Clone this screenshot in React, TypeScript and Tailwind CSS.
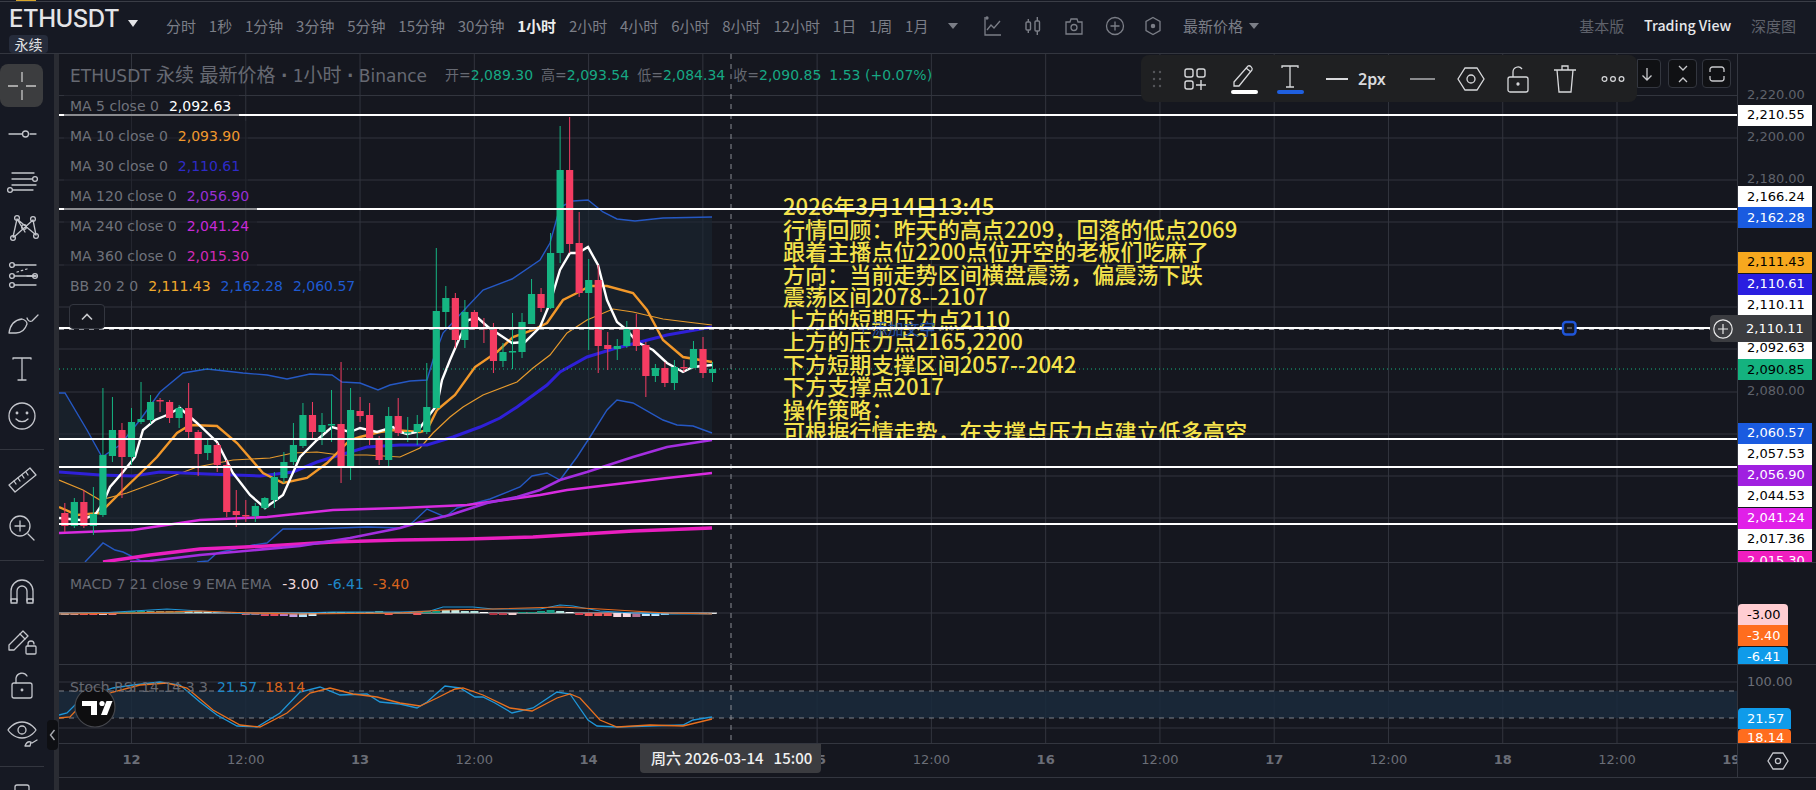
import React from "react";

const GREEN = "#15b582";
const RED = "#f43c62";

const periods = ["分时", "1秒", "1分钟", "3分钟", "5分钟", "15分钟", "30分钟", "1小时", "2小时", "4小时", "6小时", "8小时", "12小时", "1日", "1周", "1月"];

// k, bodyTop, bodyBottom, wickTop, wickBottom, isGreen
const candles: [number, number, number, number, number, number][] = [
  [-7, 513, 526, 503, 532, 0], [-6, 502, 526, 498, 528, 1], [-5, 502, 526, 490, 528, 0], [-4, 514, 526, 487, 535, 1],
  [-3, 455, 515, 388, 517, 1], [-2, 430, 456, 397, 462, 1], [-1, 430, 457, 423, 498, 0], [0, 422, 457, 408, 465, 1],
  [1, 419, 422, 382, 424, 1], [2, 402, 420, 395, 424, 1], [3, 400, 401, 398, 412, 0], [4, 402, 418, 400, 423, 0],
  [5, 408, 418, 405, 428, 1], [6, 408, 432, 383, 438, 0], [7, 432, 454, 430, 476, 0], [8, 445, 453, 438, 460, 1],
  [9, 445, 465, 443, 472, 0], [10, 465, 512, 460, 517, 0], [11, 511, 515, 490, 527, 0], [12, 515, 516, 500, 522, 0],
  [13, 506, 516, 503, 522, 1], [14, 498, 508, 497, 510, 1], [15, 477, 500, 472, 508, 1], [16, 462, 478, 452, 483, 1],
  [17, 445, 462, 423, 465, 1], [18, 415, 446, 403, 448, 1], [19, 415, 432, 402, 440, 0], [20, 425, 432, 413, 445, 1],
  [21, 424, 425, 390, 442, 1], [22, 424, 467, 362, 483, 0], [23, 410, 467, 388, 480, 1], [24, 411, 416, 397, 422, 0],
  [25, 415, 440, 403, 445, 0], [26, 440, 460, 436, 465, 0], [27, 416, 460, 407, 468, 1], [28, 416, 433, 398, 436, 0],
  [29, 432, 433, 417, 442, 1], [30, 424, 432, 415, 445, 1], [31, 407, 432, 363, 434, 1], [32, 311, 408, 248, 410, 1],
  [33, 298, 312, 286, 327, 1], [34, 298, 340, 293, 348, 0], [35, 312, 340, 300, 348, 1], [36, 312, 327, 310, 330, 0],
  [37, 328, 329, 318, 343, 0], [38, 329, 361, 323, 373, 0], [39, 352, 361, 343, 367, 1], [40, 351, 352, 313, 369, 1],
  [41, 322, 352, 313, 358, 1], [42, 294, 324, 279, 324, 1], [43, 294, 308, 288, 312, 0], [44, 253, 308, 233, 309, 1],
  [45, 170, 253, 126, 263, 1], [46, 170, 244, 117, 253, 0], [47, 243, 293, 212, 297, 0], [48, 280, 293, 259, 350, 1],
  [49, 280, 346, 265, 373, 0], [50, 345, 349, 332, 370, 0], [51, 346, 349, 339, 360, 1], [52, 328, 346, 321, 348, 1],
  [53, 328, 346, 314, 351, 0], [54, 345, 376, 342, 397, 0], [55, 368, 376, 364, 382, 1], [56, 368, 383, 362, 387, 0],
  [57, 367, 383, 360, 390, 1], [58, 367, 368, 360, 372, 0], [59, 349, 368, 341, 368, 1], [60, 349, 373, 337, 378, 0],
  [61, 369, 373, 362, 382, 1],
];

const ma5 = "59,518 80,520 95,515 103,503 110,487 123,472 135,457 143,430 155,420 167,415 180,408 197,423 217,442 233,473 250,495 265,508 283,495 300,457 307,450 317,440 332,427 350,432 360,428 377,432 393,427 400,432 407,434 417,432 427,418 437,405 442,380 450,360 460,337 468,320 478,318 488,327 500,335 512,343 525,342 540,327 550,303 560,270 570,253 578,253 588,247 598,265 607,300 617,322 627,330 637,342 653,350 667,363 683,372 693,367 712,365";
const ma10 = "59,507 77,515 100,513 123,490 147,467 157,457 177,433 190,425 217,426 237,443 263,473 283,483 307,478 327,463 350,440 360,437 380,432 393,430 420,432 427,430 437,410 455,395 475,367 497,352 513,337 533,330 547,323 563,300 577,293 590,286 607,286 633,293 647,310 663,340 683,357 712,362";
const ma20 = "59,480 83,490 100,500 127,493 157,482 197,467 233,460 270,458 293,453 317,452 340,455 367,455 400,457 420,448 433,433 450,417 463,407 483,395 517,382 533,368 550,355 567,333 587,320 613,309 633,312 663,319 687,322 712,325";
const ma30 = "59,472 100,475 133,476 160,472 207,474 260,476 293,472 317,462 340,455 367,447 400,445 427,445 453,437 480,427 500,418 517,407 547,385 560,372 587,357 613,349 640,342 667,335 712,327";
const ma120 = "130,562 150,561 200,555 300,546 350,538 400,528 417,523 450,515 487,503 517,497 540,490 560,480 587,472 633,457 667,447 712,440";
const ma240 = "59,533 133,530 200,520 267,517 333,510 400,508 467,505 540,495 567,490 617,484 667,478 712,473";
const ma360 = "103,562 150,555 200,549 267,546 333,542 400,540 467,539 533,537 583,534 633,531 712,528";
const bbUp = "59,393 65,393 87,430 102,457 120,445 140,420 160,392 183,373 207,369 243,373 267,375 287,379 310,374 332,375 342,382 360,383 378,390 390,385 410,381 427,380 433,360 443,333 467,307 483,290 512,279 540,260 550,243 560,207 573,201 588,200 603,212 617,219 635,221 663,218 712,217";
const bbLow1 = "85,562 103,543 115,550 123,552 143,562";
const bbLow2 = "197,562 208,561 217,553 253,545 267,543 283,529 310,529 367,527 400,528 412,523 427,509 445,517 457,508 490,499 520,487 532,476 547,473 560,480 577,457 590,437 607,410 617,400 633,403 663,420 677,425 693,426 712,433";
const bandFill = `${bbUp} 712,433 693,426 677,425 663,420 633,403 617,400 607,410 590,437 577,457 560,480 547,473 532,476 520,487 490,499 457,508 445,517 427,509 412,523 400,528 367,527 310,529 283,529 267,543 253,545 217,553 208,561 197,562 59,562`;

const stBlue = "59,715 67,713 77,703 93,695 113,688 133,685 160,682 180,685 200,702 217,715 237,726 257,727 280,713 300,692 320,687 340,695 367,694 380,702 400,704 417,708 427,702 445,686 460,688 475,697 483,697 495,703 512,713 533,708 557,692 570,694 588,720 597,726 617,727 650,726 683,725 693,720 712,717";
const stOrange = "59,718 70,717 83,703 113,692 140,685 167,683 187,688 213,710 240,725 260,727 287,713 310,693 330,688 353,694 377,697 400,703 420,706 437,698 455,689 463,688 483,695 510,708 532,711 557,698 570,694 580,698 600,720 617,727 650,725 683,726 712,719";
const mdBlue = "59,614 100,613 133,611 167,609 200,611 250,614 300,613 333,612 400,612 430,611 443,607 473,607 493,609 540,609 560,605 573,606 600,611 633,613 667,614 712,614";
const mdOrange = "59,614 133,613 200,611 250,613 300,614 400,613 443,610 493,609 560,607 600,609 633,611 667,613 712,614";

const histogram: [string, number][] = [
  ["#f6d5d5", -2], ["#e8a3a3", -2], ["#ef5b5b", -2], ["#ef5b5b", -2], ["#f0c0c0", -2], ["#e07a7a", -2], ["#15a085", 1], ["#159a80", 2],
  ["#1aa58c", 2], ["#6aa58c", 2], ["#8a9a6a", 2], ["#7a9a6a", 2], ["#6a9a7a", 2], ["#a8e0d8", 2], ["#b5e5de", 2], ["#c5ece6", 2],
  ["#c5ece6", 1], ["#ffffff", 1], ["#ffffff", 1], ["#ef5b5b", -2], ["#ef5b5b", -2], ["#e84a5f", -3], ["#e84a5f", -3], ["#b77ad0", -3],
  ["#c0a0e0", -4], ["#b8e0f8", -4], ["#ccefff", -3], ["#ffffff", 1], ["#a0d0b0", 1], ["#a0d0b0", 1], ["#8ab090", 1], ["#8ab090", 1],
  ["#d0d0a0", 1], ["#70b090", 2], ["#ef5b5b", -2], ["#a0b0a0", 1], ["#a0b0a0", 1], ["#ef5b5b", -2], ["#159a80", 2], ["#159a80", 2],
  ["#b5e5de", 3], ["#c5ece6", 3], ["#b5e5de", 2], ["#b5e5de", 2], ["#ffffff", 1], ["#b03040", -2], ["#c04050", -2], ["#f0d0d0", -2],
  ["#149a80", 1], ["#149a80", 1], ["#18a088", 2], ["#18a088", 3], ["#b5e5de", 2], ["#ffffff", 1], ["#d84050", -2], ["#ef5b5b", -3],
  ["#ef5b5b", -3], ["#ef5b5b", -3], ["#f8d8e0", -4], ["#f8d8e0", -4], ["#b07090", -4], ["#c8e8ff", -3], ["#c8e8ff", -3], ["#c8e8ff", -2],
  ["#9098a8", -1], ["#9098a8", -1], ["#909090", -1], ["#c8c8c8", -1], ["#e0e0e0", -1],
];

const gridX = Array.from({ length: 14 }, (_, i) => 131.5 + 114.27 * i);
const gridY = [95.5, 138, 180, 222, 265, 307, 349, 392, 434, 476, 518];

const timeLabels = ["12", "12:00", "13", "12:00", "14", "12:00", "15", "12:00", "16", "12:00", "17", "12:00", "18", "12:00", "19"];

const priceTags: { y: number; t: string; bg?: string; fg?: string }[] = [
  { y: 95, t: "2,220.00" },
  { y: 137, t: "2,200.00" },
  { y: 179, t: "2,180.00" },
  { y: 391, t: "2,080.00" },
  { y: 115, t: "2,210.55", bg: "bg-white", fg: "text-black" },
  { y: 196.5, t: "2,166.24", bg: "bg-white", fg: "text-black" },
  { y: 217.5, t: "2,162.28", bg: "bg-[#1a5be0]", fg: "text-white" },
  { y: 262, t: "2,111.43", bg: "bg-[#f7a81e]", fg: "text-black" },
  { y: 284, t: "2,110.61", bg: "bg-[#2a1ee0]", fg: "text-white" },
  { y: 305, t: "2,110.11", bg: "bg-white", fg: "text-black" },
  { y: 348, t: "2,092.63", bg: "bg-white", fg: "text-black" },
  { y: 369.5, t: "2,090.85", bg: "bg-[#14b27f]", fg: "text-black" },
  { y: 433, t: "2,060.57", bg: "bg-[#1a5be0]", fg: "text-white" },
  { y: 454, t: "2,057.53", bg: "bg-white", fg: "text-black" },
  { y: 475, t: "2,056.90", bg: "bg-[#a020e0]", fg: "text-white" },
  { y: 496, t: "2,044.53", bg: "bg-white", fg: "text-black" },
  { y: 518, t: "2,041.24", bg: "bg-[#e020e8]", fg: "text-white" },
  { y: 539, t: "2,017.36", bg: "bg-white", fg: "text-black" },
  { y: 561, t: "2,015.30", bg: "bg-[#f01ec0]", fg: "text-white" },
];

const noteLines = [
  "2026年3月14日13:45",
  "行情回顾：昨天的高点2209，回落的低点2069",
  "跟着主播点位2200点位开空的老板们吃麻了",
  "方向：当前走势区间横盘震荡，偏震荡下跌",
  "震荡区间2078--2107",
  "上方的短期压力点2110",
  "上方的压力点2165,2200",
  "下方短期支撑区间2057--2042",
  "下方支撑点2017",
  "操作策略：",
  "可根据行情走势，在支撑点压力点建立低多高空",
];

const Ico = ({ children, w = 34, h = 34 }: { children: React.ReactNode; w?: number; h?: number }) => (
  <svg width={w} height={h} viewBox="0 0 34 34" fill="none" stroke="#c4c6cc" strokeWidth="1.3" strokeLinecap="round" strokeLinejoin="round">
    {children}
  </svg>
);

const side: React.ReactNode[] = [
  <Ico key="a"><path d="M4 17h13M25 17h6M8 17" /><circle cx="20.5" cy="17" r="3" /></Ico>,
  <Ico key="b"><path d="M7 9h22M7 15h20M7 21h24M8 26h20" /><circle cx="30" cy="15" r="2.4" /><circle cx="5" cy="26" r="2.4" /></Ico>,
  <Ico key="c"><path d="M12 8 8 26M12 8l8 13M28 9 31 24M28 9 9 26M12 8l19 16" /><circle cx="12" cy="7" r="2.4" /><circle cx="28" cy="8" r="2.4" /><circle cx="8" cy="27" r="2.4" /><circle cx="31" cy="25" r="2.4" /><circle cx="19" cy="16" r="2.4" /></Ico>,
  <Ico key="d"><path d="M9 7h22M9 18h22M9 27h22" /><path d="M12 14l10-3" strokeDasharray="1.5 3" /><path d="M22 18h9" /><circle cx="7" cy="7" r="2.4" /><circle cx="7" cy="18" r="2.4" /><circle cx="7" cy="27" r="2.4" /><circle cx="30" cy="18" r="2.4" /></Ico>,
  <Ico key="e"><path d="M4 28c1-7 5-13 13-14 3 1 5 3 5 5-2 6-6 9-11 9H4Z" /><path d="M22 13c1 3 3 4 5 3l6-6" /></Ico>,
  <Ico key="f"><path d="M8 7v-1h18v1M17 6v22M13 28h8" /></Ico>,
  <Ico key="g"><circle cx="17" cy="17" r="13" /><circle cx="12" cy="14" r="0.8" /><circle cx="22" cy="14" r="0.8" /><path d="M11 20c3 3.5 9 3.5 12 0" /></Ico>,
];
const side2: React.ReactNode[] = [
  <Ico key="h"><path d="M4 21 25 4l6 7-21 17Z" /><path d="M9 17l2 3M13 14l2 3M17 11l2 3M21 8l2 3" /></Ico>,
  <Ico key="i"><circle cx="15" cy="15" r="10" /><path d="M15 10v10M10 15h10M23 23l6 6" /></Ico>,
];
const side3: React.ReactNode[] = [
  <Ico key="j"><path d="M6 26V16a11 11 0 0 1 22 0v10" /><path d="M12 26V16a5 5 0 0 1 10 0v10" /><path d="M6 24h6v4H6zM22 24h6v4h-6z" /></Ico>,
  <Ico key="k"><path d="M4 23 18 9l5 5-14 14H4Z" /><path d="M15 12l5 5" /><rect x="21" y="24" width="10" height="8" rx="1" /><path d="M23 24v-2a3 3 0 0 1 6 0" /></Ico>,
  <Ico key="l"><rect x="7" y="14" width="20" height="15" rx="2" /><path d="M11 14V9a6 6 0 0 1 11-2" /><circle cx="17" cy="21" r="0.8" /></Ico>,
  <Ico key="m"><path d="M3 14s5-8 14-8 14 8 14 8-5 8-14 8S3 14 3 14Z" /><circle cx="17" cy="14" r="4" /><path d="M20 30c1-3 3-5 6-4l-1 4ZM27 27l5-3" /></Ico>,
];

const pane = (y: number, h: number, children: React.ReactNode, withGridH: number[]) => (
  <svg className="absolute inset-0" width="1678" height={h} viewBox={`59 ${y} 1678 ${h}`}>
    {gridX.map((x) => (
      <line key={x} x1={x} x2={x} y1={y} y2={y + h} stroke="#32353e" />
    ))}
    {withGridH.map((g) => (
      <line key={g} x1="59" x2="1737" y1={g} y2={g} stroke="#32353e" />
    ))}
    {children}
  </svg>
);

const Legend = ({ label, vals }: { label: string; vals: [string, string][] }) => (
  <div className="flex h-[30px] items-center gap-[10px] bg-[#161820]/50 pl-[6px] pr-[8px] text-[14px] text-[#6f727b]">
    <span>{label}</span>
    {vals.map(([v, c]) => (
      <span key={v} className={c}>{v}</span>
    ))}
  </div>
);

export default function App() {
  return (
    <div className="relative flex h-[790px] w-[1816px] flex-col overflow-hidden bg-[#161923] font-['DejaVu_Sans','Noto_Sans_CJK_SC',sans-serif] text-[#787b86]">
      {/* top sliver */}
      <div className="absolute left-[16px] top-0 h-px w-[20px] bg-[#d9a72b]" />
      <div className="absolute left-0 right-0 top-[1px] h-px bg-[#3a3d46]" />

      {/* header */}
      <header className="flex h-[54px] shrink-0 items-start border-b border-[#33363f] font-['Noto_Sans_CJK_SC',sans-serif]">
        <div className="relative ml-[9px] w-[157px] shrink-0 pt-[4px]">
          <div className="flex items-center">
            <span className="font-['Inter',sans-serif] text-[24px] font-medium leading-[30px] tracking-[-0.5px] text-[#e4e5e8]">ETHUSDT</span>
            <span className="ml-[9px] mt-[9px] h-0 w-0 border-x-[5px] border-t-[7px] border-x-transparent border-t-[#e4e5e8]" />
          </div>
          <span className="absolute left-0 top-[35px] flex h-[18px] w-[39px] items-center justify-center rounded-sm bg-[#262c3b] text-[14px] text-[#e0e1e4]">永续</span>
        </div>
        <nav className="flex h-[53px] flex-1 items-center gap-[12.8px] pb-[1px] text-[15px] text-[#7b7e87]">
          {periods.map((p) => (
            <span key={p} className={p === "1小时" ? "font-bold text-[#eceded]" : ""}>{p}</span>
          ))}
          <span className="ml-[7px] h-0 w-0 border-x-[5px] border-t-[6px] border-x-transparent border-t-[#7b7e87]" />
          <svg className="ml-[12px]" width="18" height="22" viewBox="0 0 18 22" fill="none" stroke="#7b7e87" strokeWidth="1.3">
            <path d="M2 2v18h16M4 15l4-5 3 3 6-7" />
            <circle cx="4" cy="3" r="1" fill="#7b7e87" />
          </svg>
          <svg className="ml-[11px]" width="16" height="20" viewBox="0 0 16 20" fill="none" stroke="#7b7e87" strokeWidth="1.4">
            <rect x="1" y="6" width="4.5" height="8" rx="1" />
            <rect x="10" y="5" width="4.5" height="10" rx="1" />
            <path d="M3.3 3v3M3.3 14v3M12.3 1v4M12.3 15v4" />
          </svg>
          <svg className="ml-[11px]" width="18" height="18" viewBox="0 0 18 18" fill="none" stroke="#7b7e87" strokeWidth="1.3">
            <path d="M1 5h4l1-3h6l1 3h4v12H1Z" />
            <circle cx="9" cy="10.5" r="3" />
          </svg>
          <svg className="ml-[10px]" width="20" height="20" viewBox="0 0 20 20" fill="none" stroke="#7b7e87" strokeWidth="1.3">
            <circle cx="10" cy="10" r="8.5" />
            <path d="M10 5.5v9M5.5 10h9" />
          </svg>
          <svg className="ml-[6px]" width="18" height="20" viewBox="0 0 18 20" fill="none" stroke="#7b7e87" strokeWidth="1.3">
            <path d="M9 1.5 16 5.5v9L9 18.5l-7-4v-9Z" />
            <circle cx="9" cy="10" r="1.6" fill="#7b7e87" />
          </svg>
          <span className="ml-[8px]">最新价格</span>
          <span className="-ml-[7px] h-0 w-0 border-x-[5px] border-t-[6px] border-x-transparent border-t-[#7b7e87]" />
          <span className="ml-auto text-[#5f626b]">基本版</span>
          <span className="ml-[7px] text-[14.2px] font-medium text-[#e6e7ea]">Trading View</span>
          <span className="ml-[7px] mr-[20px] text-[#5f626b]">深度图</span>
        </nav>
      </header>

      <div className="flex min-h-0 flex-1">
        {/* left toolbar */}
        <aside className="relative flex w-[59px] shrink-0 overflow-hidden">
          <div className="flex w-[44px] shrink-0 flex-col pt-[10px]">
            <div className="flex h-[43px] w-[43px] shrink-0 items-center justify-center rounded-lg bg-[#3c3d3f]">
              <svg width="30" height="30" viewBox="0 0 30 30" stroke="#c8c8c8" strokeWidth="1.3">
                <path d="M1 15h10M19 15h10M15 1v10M15 19v10" />
              </svg>
            </div>
            <div className="mt-[3px] flex flex-col">
              {side.map((n, i) => (
                <div key={i} className="flex h-[47px] items-center justify-center">{n}</div>
              ))}
            </div>
            <div className="mt-[10px] h-px shrink-0 bg-[#33363f]" />
            <div className="mt-[7px] flex flex-col">
              {side2.map((n, i) => (
                <div key={i} className="flex h-[47px] items-center justify-center">{n}</div>
              ))}
            </div>
            <div className="mt-[9px] h-px shrink-0 bg-[#33363f]" />
            <div className="mt-[7px] flex flex-col">
              {side3.map((n, i) => (
                <div key={i} className="flex h-[47px] items-center justify-center">{n}</div>
              ))}
            </div>
            <div className="mt-[10px] h-px shrink-0 bg-[#33363f]" />
            <div className="mt-[12px] flex shrink-0 justify-center">
              <Ico><rect x="10" y="6" width="14" height="24" rx="2" /></Ico>
            </div>
          </div>
          <div className="ml-auto w-[5px] bg-[#2a2c33]" />
          <div className="absolute left-[47px] top-[666px] flex h-[30px] w-[11px] items-center justify-center rounded bg-[#0e0f13] text-[#a8aab0]">
            <svg width="7" height="12" viewBox="0 0 7 12" fill="none" stroke="currentColor" strokeWidth="1.4"><path d="M5.5 1 1.5 6l4 5" /></svg>
          </div>
        </aside>

        {/* chart panes */}
        <main className="flex min-w-0 flex-1 flex-col bg-[#15171f]">
          {/* price pane */}
          <section className="relative flex h-[509px] shrink-0 border-b border-[#33363f]">
            <div className="relative w-[1678px] shrink-0 overflow-hidden">
              {pane(
                54,
                508,
                <>
                  <polygon points={bandFill} fill="#1b2632" opacity="0.6" />
                  <polyline points={bbUp} fill="none" stroke="#2558c4" strokeWidth="1.4" />
                  <polyline points={bbLow1} fill="none" stroke="#2558c4" strokeWidth="1.4" />
                  <polyline points={bbLow2} fill="none" stroke="#2558c4" strokeWidth="1.4" />
                  <polyline points={ma20} fill="none" stroke="#e79a2c" strokeWidth="1.2" />
                  <polyline points={ma360} fill="none" stroke="#ea1fc0" strokeWidth="3.4" />
                  <polyline points={ma240} fill="none" stroke="#d92be0" strokeWidth="2.6" />
                  <polyline points={ma120} fill="none" stroke="#a42ee0" strokeWidth="2.6" />
                  <polyline points={ma30} fill="none" stroke="#2f20d8" strokeWidth="3" />
                  <polyline points={ma10} fill="none" stroke="#f2982a" strokeWidth="2.4" />
                  <polyline points={ma5} fill="none" stroke="#ffffff" strokeWidth="2.4" />
                  <line x1="59" x2="1737" y1="369" y2="369" stroke="#15b582" strokeDasharray="1 3" />
                  {candles.map(([k, a, b, t, l, g]) => {
                    const x = 131.5 + 9.525 * k;
                    const c = g ? GREEN : RED;
                    return (
                      <g key={k}>
                        <line x1={x} x2={x} y1={t} y2={l} stroke={c} strokeWidth="1" />
                        <rect x={x - 3.6} y={a} width="7.2" height={Math.max(b - a, 1.5)} fill={c} />
                      </g>
                    );
                  })}
                  <line x1="731" x2="731" y1="54" y2="562" stroke="#8a8d94" strokeDasharray="5 5" />
                </>,
                gridY,
              )}

              {/* drawn note */}
              <div className="absolute left-[724px] top-[140px] h-[245px] w-[520px] overflow-hidden font-['Noto_Sans_CJK_SC',sans-serif] text-[22.1px] font-medium leading-[22.5px] text-[#f4e24c]">
                {noteLines.map((l) => (
                  <div key={l} className="whitespace-nowrap">{l}</div>
                ))}
              </div>
              <div className="absolute left-[800px] top-[263px] font-['Noto_Sans_CJK_SC',sans-serif] text-[16px] leading-[22px] text-[#25509f]">+ 添加文字</div>

              {/* horizontal drawings */}
              <svg className="absolute inset-0" width="1678" height="508" viewBox="59 54 1678 508">
                <line x1="59" x2="1710" y1="329.5" y2="329.5" stroke="#8a8d94" strokeDasharray="5 5" />
                {[115, 209, 439, 467, 524].map((y) => (
                  <line key={y} x1="59" x2="1737" y1={y} y2={y} stroke="#ffffff" strokeWidth="2" />
                ))}
                <line x1="59" x2="1710" y1="328" y2="328" stroke="#ffffff" strokeWidth="2" />
                <rect x="1563" y="322" width="12.5" height="12.5" rx="3" fill="#15171f" stroke="#1f55d8" strokeWidth="2.4" />
                <line x1="1567" x2="1572" y1="328" y2="328" stroke="#8a8d94" />
              </svg>

              {/* legend */}
              <div className="absolute left-[5px] top-0 flex flex-col items-start">
                <div className="flex h-[37px] items-center whitespace-nowrap pl-[6px] pt-[5px] text-[#666972]">
                  <span className="text-[17px]">
                    ETHUSDT <span className="text-[19px]">永续</span> <span className="text-[19px]">最新价格</span> <b>·</b> 1<span className="text-[19px]">小时</span> <b>·</b> Binance
                  </span>
                  <span className="ml-[18px] flex gap-[8px] text-[14px]">
                    <span>开=<span className="text-[#17a884]">2,089.30</span></span>
                    <span>高=<span className="text-[#17a884]">2,093.54</span></span>
                    <span>低=<span className="text-[#17a884]">2,084.34</span></span>
                    <span>收=<span className="text-[#17a884]">2,090.85</span></span>
                    <span className="text-[#17a884]">1.53 (+0.07%)</span>
                  </span>
                </div>
                <Legend label="MA 5 close 0" vals={[["2,092.63", "text-white"]]} />
                <Legend label="MA 10 close 0" vals={[["2,093.90", "text-[#f0982e]"]]} />
                <Legend label="MA 30 close 0" vals={[["2,110.61", "text-[#2e2bc8]"]]} />
                <Legend label="MA 120 close 0" vals={[["2,056.90", "text-[#9a2fd4]"]]} />
                <Legend label="MA 240 close 0" vals={[["2,041.24", "text-[#c82ad8]"]]} />
                <Legend label="MA 360 close 0" vals={[["2,015.30", "text-[#d02ab8]"]]} />
                <Legend label="BB 20 2 0" vals={[["2,111.43", "text-[#f0a92d]"], ["2,162.28", "text-[#1f5ad0]"], ["2,060.57", "text-[#1f5ad0]"]]} />
              </div>
              <div className="absolute left-[10px] top-[250px] flex h-[25px] w-[36px] items-center justify-center rounded border border-[#33363f] bg-[#15171f] text-[#c8c9cc]">
                <svg width="12" height="8" viewBox="0 0 12 8" fill="none" stroke="currentColor" strokeWidth="1.6"><path d="M1 6.5 6 1.5l5 5" /></svg>
              </div>

              {/* floating drawing toolbar */}
              <div className="absolute left-[1578px] top-[5px] flex h-[29px] w-[94px] items-center gap-[5px] text-[#c8c9cc]">
                <span className="mr-[2px] flex h-[29px] w-[24px] items-center justify-center rounded-r border border-[#33363f] bg-[#101114] pr-[4px]">
                  <svg width="12" height="14" viewBox="0 0 12 14" fill="none" stroke="currentColor" strokeWidth="1.3"><path d="M6 1v12M1.5 8.5 6 13l4.5-4.5" /></svg>
                </span>
                <span className="flex h-[29px] w-[29px] items-center justify-center rounded border border-[#33363f] bg-[#101114]">
                  <svg width="12" height="18" viewBox="0 0 12 18" fill="none" stroke="currentColor" strokeWidth="1.3"><path d="M2 1l4 4 4-4M2 17l4-4 4 4" /></svg>
                </span>
                <span className="flex h-[29px] w-[29px] items-center justify-center rounded border border-[#33363f] bg-[#101114]">
                  <svg width="16" height="16" viewBox="0 0 16 16" fill="none" stroke="currentColor" strokeWidth="1.3"><path d="M1 6V3.5A2.5 2.5 0 0 1 3.5 1h9A2.5 2.5 0 0 1 15 3.5V6M1 10v2.5A2.5 2.5 0 0 0 3.5 15h9a2.5 2.5 0 0 0 2.5-2.5V10" /></svg>
                </span>
              </div>
              <div className="absolute left-[1082px] top-[1px] flex h-[47px] w-[496px] items-center rounded-lg bg-[#1f2022] font-['Noto_Sans',sans-serif]">
                <svg className="ml-[11px]" width="10" height="20" viewBox="0 0 10 20" fill="#55575b">
                  <circle cx="2" cy="3" r="1.2" /><circle cx="8" cy="3" r="1.2" /><circle cx="2" cy="10" r="1.2" /><circle cx="8" cy="10" r="1.2" /><circle cx="2" cy="17" r="1.2" /><circle cx="8" cy="17" r="1.2" />
                </svg>
                <svg className="ml-[21px]" width="24" height="24" viewBox="0 0 24 24" fill="none" stroke="#d8d9dc" strokeWidth="1.4">
                  <rect x="2" y="2" width="8" height="8" rx="2" /><rect x="14" y="2" width="8" height="8" rx="2" /><rect x="2" y="14" width="8" height="8" rx="2" /><path d="M18 13v10M13 18h10" />
                </svg>
                <div className="ml-[23px] flex w-[28px] flex-col items-center">
                  <svg width="24" height="26" viewBox="0 0 24 26" fill="none" stroke="#d8d9dc" strokeWidth="1.3"><path d="M2 19 16 3c2-1 5 2 4 4L7 23H2Z" /><path d="M14 5l5 4" /></svg>
                  <span className="mt-[1px] h-[4px] w-[27px] rounded-full bg-white" />
                </div>
                <div className="ml-[18px] flex w-[28px] flex-col items-center">
                  <svg width="22" height="26" viewBox="0 0 22 26" fill="none" stroke="#d8d9dc" strokeWidth="1.3"><path d="M3 5V3h16v2M11 3v21M7 24h8" /></svg>
                  <span className="mt-[1px] h-[4px] w-[27px] rounded-full bg-[#1f5fe0]" />
                </div>
                <span className="ml-[22px] h-[2px] w-[22px] bg-[#d8d9dc]" />
                <span className="ml-[10px] text-[16px] font-semibold text-[#d8d9dc]">2px</span>
                <span className="ml-[24px] h-[2px] w-[25px] bg-[#8a8b8e]" />
                <svg className="ml-[22px]" width="28" height="26" viewBox="0 0 28 26" fill="none" stroke="#d8d9dc" strokeWidth="1.3"><path d="M8 2h12l7 11-7 11H8L1 13Z" /><circle cx="14" cy="13" r="4" /></svg>
                <svg className="ml-[22px]" width="22" height="28" viewBox="0 0 22 28" fill="none" stroke="#d8d9dc" strokeWidth="1.3"><rect x="1" y="12" width="20" height="15" rx="2" /><path d="M6 12V7a5 5 0 0 1 9-3" /><circle cx="11" cy="19" r="1" fill="#d8d9dc" /></svg>
                <svg className="ml-[24px]" width="24" height="30" viewBox="0 0 24 30" fill="none" stroke="#d8d9dc" strokeWidth="1.3"><path d="M1 6h22M9 6V2h6v4M4 6l2 22h12l2-22" /></svg>
                <svg className="ml-[24px]" width="24" height="8" viewBox="0 0 24 8" fill="none" stroke="#d8d9dc" strokeWidth="1.2"><circle cx="3.5" cy="4" r="2.4" /><circle cx="12" cy="4" r="2.4" /><circle cx="20.5" cy="4" r="2.4" /></svg>
              </div>
            </div>

            {/* price axis */}
            <div className="relative w-[79px] shrink-0 overflow-hidden border-l border-[#33363f]">
              {priceTags.map((p) => (
                <div
                  key={p.t}
                  className={`absolute left-0 flex h-[21px] w-[74px] items-center pl-[9px] text-[13px] ${p.bg ?? ""} ${p.fg ?? "text-[#5f626b]"}`}
                  style={{ top: p.y - 54 - 10.5 }}
                >
                  {p.t}
                </div>
              ))}
            </div>

            {/* crosshair price */}
            <div className="absolute left-[1651px] top-[261px] flex h-[27px] w-[102px] items-center rounded-l-sm bg-[#3b3c40] text-[13px] text-white">
              <svg className="ml-[3px]" width="20" height="20" viewBox="0 0 20 20" fill="none" stroke="#e8e8e8" strokeWidth="1.2"><circle cx="10" cy="10" r="9.2" /><path d="M10 5v10M5 10h10" /></svg>
              <span className="ml-[13px]">2,110.11</span>
            </div>
          </section>

          {/* MACD */}
          <section className="flex h-[102px] shrink-0 border-b border-[#33363f]">
            <div className="relative w-[1678px] shrink-0">
              {pane(
                563,
                101,
                <>
                  <line x1="59" x2="1737" y1="613" y2="613" stroke="#32353e" />
                  <line x1="59" x2="717" y1="613" y2="613" stroke="#d8d8d8" />
                  {histogram.map(([c, h], i) => {
                    const x = 131.5 + 9.525 * (i - 7);
                    return <rect key={i} x={x - 4} y={h > 0 ? 613 - h : 613} width="8" height={Math.abs(h)} fill={c} />;
                  })}
                  <polyline points={mdBlue} fill="none" stroke="#1f96d8" strokeWidth="1.1" />
                  <polyline points={mdOrange} fill="none" stroke="#e86a1e" strokeWidth="1.1" />
                  <line x1="731" x2="731" y1="563" y2="664" stroke="#8a8d94" strokeDasharray="5 5" />
                </>,
                [],
              )}
              <div className="absolute left-[11px] top-[10px] flex h-[22px] items-center gap-[9px] whitespace-nowrap text-[14px] text-[#666972]">
                <span className="mr-[2px]">MACD 7 21 close 9 EMA EMA</span>
                <span className="text-[#f0d8dc]">-3.00</span>
                <span className="text-[#1f88c8]">-6.41</span>
                <span className="text-[#d8641e]">-3.40</span>
              </div>
            </div>
            <div className="flex w-[79px] shrink-0 flex-col overflow-hidden border-l border-[#33363f] pt-[41px] text-[13px]">
              <div className="flex h-[21px] w-[50px] shrink-0 items-center rounded-t-sm bg-[#ffcdd2] pl-[9px] text-black">-3.00</div>
              <div className="flex h-[21px] w-[50px] shrink-0 items-center bg-[#ff6d1e] pl-[9px] text-white">-3.40</div>
              <div className="mt-px flex h-[17px] w-[50px] shrink-0 items-start rounded-t-sm bg-[#0f9bea] pl-[9px] text-white">-6.41</div>
            </div>
          </section>

          {/* Stoch */}
          <section className="flex h-[79px] shrink-0 border-b border-[#33363f]">
            <div className="relative w-[1678px] shrink-0 overflow-hidden">
              {pane(
                665,
                78,
                <>
                  <rect x="59" y="691" width="1678" height="27" fill="#1a2a3c" opacity="0.85" />
                  <line x1="59" x2="1737" y1="691" y2="691" stroke="#7d8088" strokeDasharray="5 5" />
                  <line x1="59" x2="1737" y1="718" y2="718" stroke="#7d8088" strokeDasharray="5 5" />
                  <polyline points={stBlue} fill="none" stroke="#1f96d8" strokeWidth="1.3" />
                  <polyline points={stOrange} fill="none" stroke="#e8701e" strokeWidth="1.3" />
                  <line x1="731" x2="731" y1="665" y2="743" stroke="#8a8d94" strokeDasharray="5 5" />
                  <circle cx="95" cy="707" r="20" fill="#0e0e10" stroke="#45474d" strokeWidth="1.2" />
                  <path d="M82 701h15v14h-6v-9h-9Z" fill="#fff" />
                  <circle cx="102" cy="703.5" r="2.6" fill="#fff" />
                  <path d="M101 715l5.5-14h6L107 715Z" fill="#fff" />
                </>,
                [682, 728],
              )}
              <div className="absolute left-[11px] top-[11px] flex h-[22px] items-center gap-[8px] whitespace-nowrap text-[14px] text-[#666972]">
                <span className="mr-[1px]">Stoch RSI 14 14 3 3</span>
                <span className="text-[#1f88c8]">21.57</span>
                <span className="text-[#d8641e]">18.14</span>
              </div>
            </div>
            <div className="flex w-[79px] shrink-0 flex-col overflow-hidden border-l border-[#33363f] text-[13px]">
              <div className="mt-[6px] flex h-[21px] shrink-0 items-center pl-[9px] text-[#6b6e77]">100.00</div>
              <div className="mt-[16px] flex h-[21px] w-[53px] shrink-0 items-center rounded-t-sm bg-[#0f9bea] pl-[9px] text-white">21.57</div>
              <div className="flex h-[14px] w-[53px] shrink-0 items-start overflow-hidden rounded-t-sm bg-[#ff6d1e] pl-[9px] leading-[18px] text-white">18.14</div>
            </div>
          </section>

          {/* time axis */}
          <section className="flex h-[34px] shrink-0 border-b border-[#33363f]">
            <div className="relative flex w-[1678px] shrink-0 items-center overflow-hidden pl-[15.4px] pb-[1px] text-[13px] text-[#6b6e77]">
              {timeLabels.map((l, i) => (
                <span key={i} className={`w-[114.27px] shrink-0 text-center ${l.includes(":") ? "" : "font-bold"}`}>{l}</span>
              ))}
              <div className="absolute left-[581px] top-0 flex h-[29px] w-[181px] items-center rounded-b bg-[#3b3c40] pl-[11px] font-['Noto_Sans_CJK_SC',sans-serif] text-[15px] font-medium text-[#f0f0f0]">
                周六 2026-03-14 &nbsp; 15:00
              </div>
            </div>
            <div className="flex w-[79px] shrink-0 items-center border-l border-[#33363f] pl-[29px]">
              <svg width="22" height="22" viewBox="0 0 22 22" fill="none" stroke="#c4c6cc" strokeWidth="1.3"><path d="M6 3h10l5 8-5 8H6l-5-8Z" /><circle cx="11" cy="11" r="2.6" /></svg>
            </div>
          </section>
        </main>
      </div>
    </div>
  );
}
